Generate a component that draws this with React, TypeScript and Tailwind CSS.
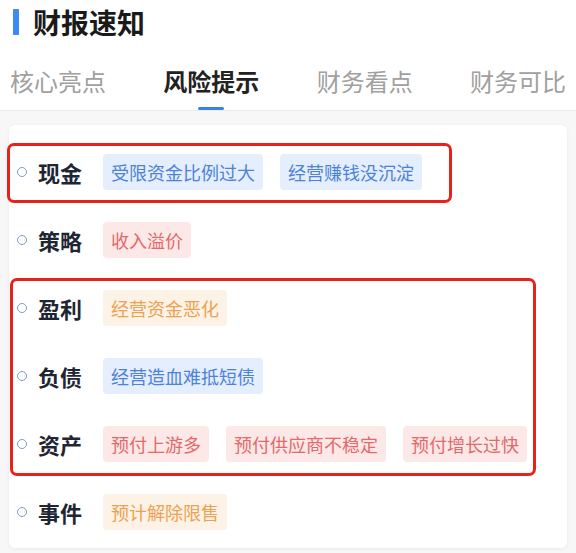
import React from 'react'

type Tone = 'blue' | 'red' | 'orange'

const toneClass: Record<Tone, string> = {
  blue: 'bg-[#e4eefc] text-[#4c83d8]',
  red: 'bg-[#fde8e8] text-[#e26a6a]',
  orange: 'bg-[#fdf2e6] text-[#eba253]',
}

const rows: { label: string; tags: { text: string; tone: Tone }[] }[] = [
  {
    label: '现金',
    tags: [
      { text: '受限资金比例过大', tone: 'blue' },
      { text: '经营赚钱没沉淀', tone: 'blue' },
    ],
  },
  { label: '策略', tags: [{ text: '收入溢价', tone: 'red' }] },
  { label: '盈利', tags: [{ text: '经营资金恶化', tone: 'orange' }] },
  { label: '负债', tags: [{ text: '经营造血难抵短债', tone: 'blue' }] },
  {
    label: '资产',
    tags: [
      { text: '预付上游多', tone: 'red' },
      { text: '预付供应商不稳定', tone: 'red' },
      { text: '预付增长过快', tone: 'red' },
    ],
  },
  { label: '事件', tags: [{ text: '预计解除限售', tone: 'orange' }] },
]

const tabs = ['核心亮点', '风险提示', '财务看点', '财务可比']

export default function App() {
  return (
    <div
      className="w-[576px] h-[553px] overflow-hidden bg-white"
      style={{ fontFamily: '"Noto Sans CJK SC", "Noto Sans", sans-serif' }}
    >
      {/* header */}
      <div className="flex h-[44px] items-center pl-[13px]">
        <div className="h-[26px] w-[6px] rounded-[1px] bg-[#3d8af7]" />
        <h1 className="ml-[14px] text-[28px] font-bold leading-none text-[#1a1a1a]">财报速知</h1>
      </div>

      {/* tabs */}
      <div className="flex justify-between border-b border-[#ebebeb] px-[10px] pt-[25px]">
        {tabs.map((t) => {
          const active = t === '风险提示'
          return (
            <div key={t} className="flex flex-col items-center">
              <span
                className={
                  active
                    ? 'text-[24px] font-bold leading-none text-[#222]'
                    : 'text-[24px] leading-none text-[#a0a0a0]'
                }
              >
                {t}
              </span>
              <div
                className={
                  active
                    ? 'mt-[14px] h-[3px] w-[26px] rounded-full bg-[#3b82e0]'
                    : 'mt-[14px] h-[3px] w-[26px] bg-transparent'
                }
              />
            </div>
          )
        })}
      </div>

      {/* body */}
      <div className="h-full bg-[#f7f7f7] px-[9px] pt-[14px]">
        <div className="relative rounded-[6px] bg-white pb-[2px] pl-[8px] pt-[13px] shadow-[0_1px_4px_rgba(0,0,0,0.06)]">
          {rows.map((r) => (
            <div key={r.label} className="flex h-[68px] items-center">
              <span className="h-[10px] w-[10px] rounded-full border-[1.5px] border-[#7f9dca]" />
              <span className="ml-[11px] text-[22px] font-bold leading-none text-[#1f2633]">{r.label}</span>
              <div className="ml-[21px] flex gap-[17px]">
                {r.tags.map((tag) => (
                  <span
                    key={tag.text}
                    className={`flex h-[36px] items-center rounded-[4px] px-[8px] text-[18px] leading-none ${toneClass[tag.tone]}`}
                  >
                    {tag.text}
                  </span>
                ))}
              </div>
            </div>
          ))}

          {/* annotation boxes */}
          <div className="pointer-events-none absolute left-[-2px] top-[18px] h-[60px] w-[445px] rounded-[7px] border-[3px] border-[#e8221b]" />
          <div className="pointer-events-none absolute left-[1px] top-[153px] h-[198px] w-[526px] rounded-[7px] border-[3px] border-[#e8221b]" />
        </div>
      </div>
    </div>
  )
}
